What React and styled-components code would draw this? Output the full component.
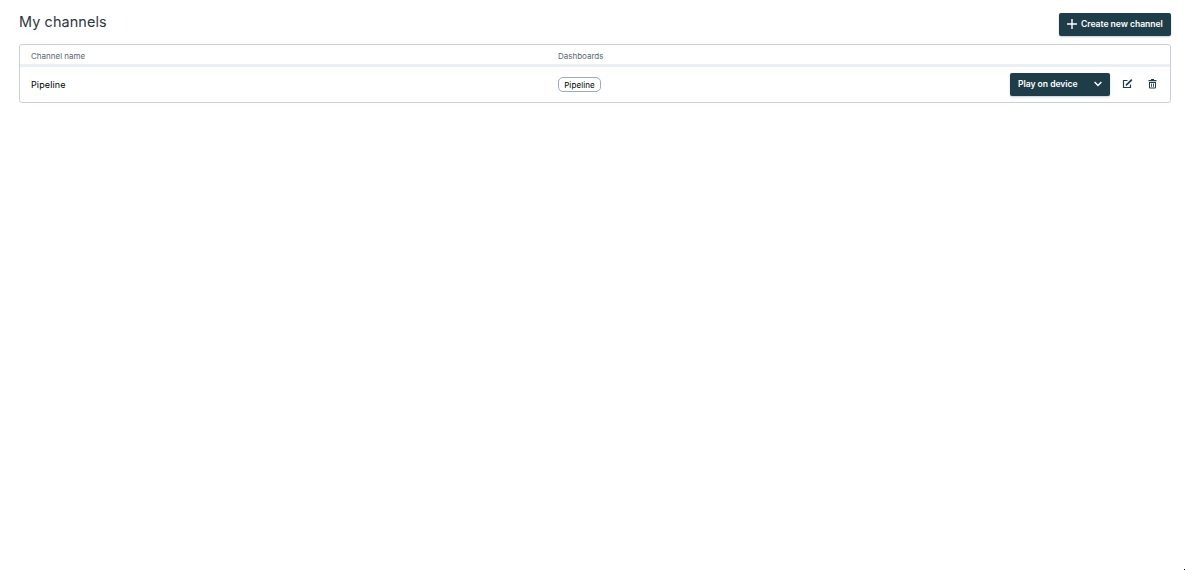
import React from 'react'
import styled, { createGlobalStyle } from 'styled-components'

const GlobalStyle = createGlobalStyle`
    * {
        box-sizing: border-box;
    }
    body {
        margin: 0;
        background: #fff;
        font-family: Inter, 'Liberation Sans', sans-serif;
    }
`

const Page = styled.main`
    display: flex;
    flex-direction: column;
    height: 570px;
    padding: 13px 14px 0 19px;
`

const Header = styled.header`
    display: flex;
    justify-content: space-between;
    align-items: flex-start;
    height: 31px;
`

const Title = styled.h1`
    margin: 0;
    font-size: 14.4px;
    line-height: 18px;
    font-weight: 400;
    letter-spacing: 0.12px;
    color: #2d3640;
`

const Button = styled.button`
    display: flex;
    align-items: center;
    height: 23px;
    width: ${ props => props.$width };
    padding: 0 8px 1px;
    border: 0;
    border-radius: 2px;
    background: #1f3d49;
    box-shadow: 0 1px 2px rgba(31, 61, 73, 0.25);
    color: #fff;
    font-family: inherit;
    font-size: 8.6px;
    line-height: 22px;
    font-weight: 600;
    white-space: nowrap;
    svg {
        flex: none;
    }
`

const ButtonLabel = styled.span`
    flex: 1;
    text-align: left;
    letter-spacing: -0.04px;
`

const Table = styled.section`
    height: 59px;
    border: 1px solid #c8cedb;
    border-radius: 3px;
`

const Row = styled.div`
    display: grid;
    grid-template-columns: 527px 1fr auto;
    align-items: center;
    height: 35px;
    padding: 0 13px 0 11px;
    font-size: 9px;
    color: #000;
`

const HeadRow = styled(Row)`
    height: 22px;
    border-bottom: 3px solid #ebeff3;
    padding-top: 3px;
    font-size: 8px;
    color: #5b6570;
`

const ChannelName = styled.span`
    font-size: 9px;
    font-weight: 400;
    letter-spacing: 0.12px;
`

const Tag = styled.span`
    justify-self: start;
    width: 43px;
    height: 15px;
    border: 1px solid #9dabbd;
    border-radius: 5px;
    font-size: 8px;
    line-height: 14px;
    font-weight: 400;
    letter-spacing: 0.1px;
    text-align: center;
`

const Actions = styled.div`
    display: flex;
    align-items: center;
`

const IconButton = styled.button`
    display: flex;
    padding: 0 0 2px;
    margin-left: ${ props => props.$gap };
    border: 0;
    background: none;
    color: #1f3d49;
`

const Corner = styled.i`
    align-self: flex-end;
    width: 1px;
    height: 1px;
    margin: auto -14px 0 0;
    background: #000;
`

const PlusSvg = styled.svg`
    margin-right: 4px;
`

const PlusIcon = () => (
    <PlusSvg width="10" height="10" viewBox="0 0 10 10" stroke="currentColor" strokeWidth="1.4">
        <path d="M5 0v10M0 5h10" />
    </PlusSvg>
)

const ChevronIcon = () => (
    <svg width="8" height="6" viewBox="0 0 8 6" fill="none" stroke="currentColor" strokeWidth="1.4">
        <path d="M.6 1 4 4.5 7.4 1" />
    </svg>
)

const EditIcon = () => (
    <svg width="11" height="10" viewBox="0 0 11 10" fill="none" stroke="currentColor">
        <path d="M5.5 1.5h-4v7h7V5.5" strokeWidth="1.2" />
        <path d="M4 6.3 9.8.6" strokeWidth="1.7" />
    </svg>
)

const TrashIcon = () => (
    <svg width="9" height="10" viewBox="0 0 9 10" fill="none" stroke="currentColor">
        <path d="M.5 1.7h8M3 .7h3" strokeWidth="1.3" />
        <path d="M1.5 3v6h6V3M1.5 3.5h6" />
        <path d="M3.5 4.5v3.3M5.5 4.5v3.3" strokeWidth=".9" />
    </svg>
)

const App = () => (
    <>
        <GlobalStyle />
        <Page>
            <Header>
                <Title>My channels</Title>
                <Button $width="112px">
                    <PlusIcon />
                    <ButtonLabel>Create new channel</ButtonLabel>
                </Button>
            </Header>
            <Table>
                <HeadRow>
                    <span>Channel name</span>
                    <span>Dashboards</span>
                </HeadRow>
                <Row>
                    <ChannelName>Pipeline</ChannelName>
                    <Tag>Pipeline</Tag>
                    <Actions>
                        <Button $width="100px">
                            <ButtonLabel>Play on device</ButtonLabel>
                            <ChevronIcon />
                        </Button>
                        <IconButton $gap="12px" aria-label="Edit">
                            <EditIcon />
                        </IconButton>
                        <IconButton $gap="15px" aria-label="Delete">
                            <TrashIcon />
                        </IconButton>
                    </Actions>
                </Row>
            </Table>
            <Corner />
        </Page>
    </>
)

export default App
